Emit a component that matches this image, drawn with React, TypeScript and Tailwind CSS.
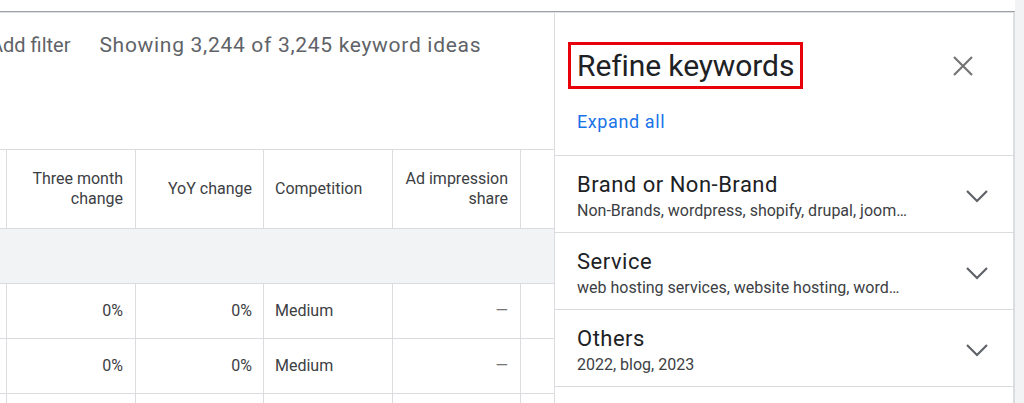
import React from "react";

function Chevron() {
  return (
    <svg width="24" height="14" viewBox="0 0 24 14" className="shrink-0 mt-[18px]">
      <polyline points="2,2 12,12 22,2" fill="none" stroke="#5f6368" strokeWidth="2.2" />
    </svg>
  );
}

function CloseX() {
  return (
    <svg width="20" height="20" viewBox="0 0 20 20">
      <path d="M1 1 L19 19 M19 1 L1 19" stroke="#757575" strokeWidth="2.2" fill="none" />
    </svg>
  );
}

const items = [
  { title: "Brand or Non-Brand", sub: "Non-Brands, wordpress, shopify, drupal, joom…" },
  { title: "Service", sub: "web hosting services, website hosting, word…" },
  { title: "Others", sub: "2022, blog, 2023" },
];

function DataRow() {
  return (
    <div className="flex h-[55px] border-b border-[#dadce0] text-[16px] text-[#3c4043]">
      <div className="w-[7px] border-r border-[#dadce0]" />
      <div className="w-[129px] border-r border-[#dadce0] flex items-center justify-end pr-[12px]">0%</div>
      <div className="w-[128px] border-r border-[#dadce0] flex items-center justify-end pr-[11px]">0%</div>
      <div className="w-[129px] border-r border-[#dadce0] flex items-center pl-[11px]">Medium</div>
      <div className="w-[128px] border-r border-[#dadce0] flex items-center justify-end pr-[12px] text-[#757575]">—</div>
      <div className="flex-1" />
    </div>
  );
}

export default function App() {
  return (
    <div className="w-[1024px] h-[403px] bg-white flex overflow-hidden font-['Roboto',sans-serif]">
      <div className="w-[1015px] flex flex-col">
        <div className="h-[11px] shrink-0" />
        <div className="h-[1px] bg-[#9aa0a6] shrink-0" />
        <div className="h-[1px] bg-[#e0e0e0] shrink-0" />
        <div className="flex flex-1 min-h-0">
          {/* left */}
          <div className="w-[555px] border-r border-[#dadce0] flex flex-col shrink-0">
            <div className="h-[136px] shrink-0 flex items-start pt-[17px] text-[21px] text-[#5f6368] whitespace-nowrap overflow-hidden">
              <span className="ml-[-10px] text-[20px] leading-[31px]">Add filter</span>
              <span className="ml-[29px] tracking-[0.7px]">Showing 3,244 of 3,245 keyword ideas</span>
            </div>
            <div className="flex h-[80px] border-t border-b border-[#dadce0] text-[16px] leading-[20px] text-[#3c4043] shrink-0">
              <div className="w-[7px] border-r border-[#dadce0]" />
              <div className="w-[129px] border-r border-[#dadce0] flex items-center justify-end text-right pr-[12px]">Three month<br />change</div>
              <div className="w-[128px] border-r border-[#dadce0] flex items-center justify-end pr-[11px]">YoY change</div>
              <div className="w-[129px] border-r border-[#dadce0] flex items-center pl-[11px]">Competition</div>
              <div className="w-[128px] border-r border-[#dadce0] flex items-center justify-end text-right pr-[12px]">Ad impression<br />share</div>
              <div className="flex-1" />
            </div>
            <div className="h-[55px] bg-[#f1f3f4] border-b border-[#dadce0] shrink-0" />
            <DataRow />
            <DataRow />
            <div className="flex flex-1">
              <div className="w-[7px] border-r border-[#dadce0]" />
              <div className="w-[129px] border-r border-[#dadce0]" />
              <div className="w-[128px] border-r border-[#dadce0]" />
              <div className="w-[129px] border-r border-[#dadce0]" />
              <div className="w-[128px] border-r border-[#dadce0]" />
              <div className="flex-1" />
            </div>
          </div>
          {/* panel */}
          <div className="flex-1 border-r-2 border-[#dadce0] flex flex-col">
            <div className="h-[143px] shrink-0 border-b border-[#dadce0] flex flex-col pl-[22px] pr-[40px]">
              <div className="flex items-center justify-between mt-[29px]">
                <div className="border-[3px] border-[#e8000b] px-[6px] h-[47px] flex items-center ml-[-9px]">
                  <span className="text-[30px] text-[#202124] leading-none tracking-[-0.1px]">Refine keywords</span>
                </div>
                <CloseX />
              </div>
              <div className="mt-[19px] text-[18px] tracking-[0.6px] text-[#1a73e8]">Expand all</div>
            </div>
            {items.map((it) => (
              <div key={it.title} className="h-[77px] shrink-0 border-b border-[#dadce0] flex items-start pt-[15px] pl-[22px] pr-[24px]">
                <div className="flex-1 flex flex-col">
                  <div className="text-[22px] leading-[28px] tracking-[0.5px] text-[#202124]">{it.title}</div>
                  <div className="text-[16px] leading-[23px] text-[#3c4043] whitespace-nowrap">{it.sub}</div>
                </div>
                <Chevron />
              </div>
            ))}
          </div>
        </div>
      </div>
      <div className="flex-1 bg-[#f1f3f4]" />
    </div>
  );
}
